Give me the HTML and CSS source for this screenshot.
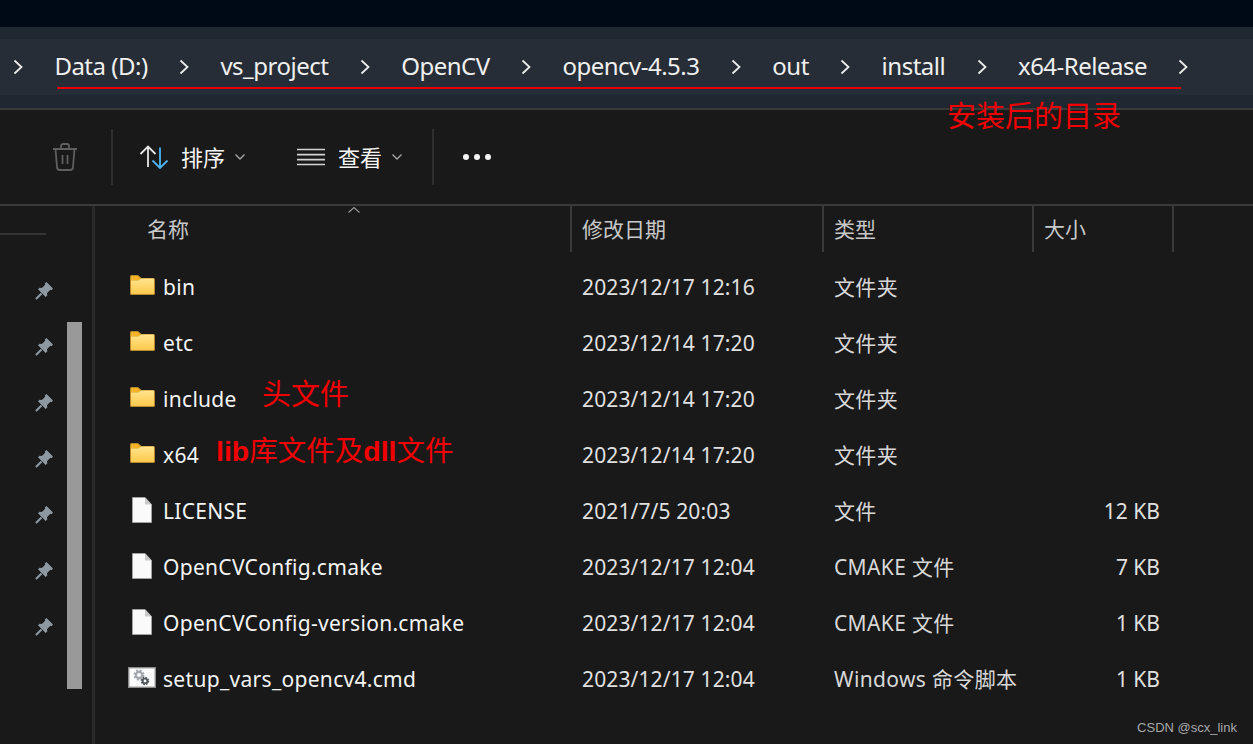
FILE: index.html
```html
<!DOCTYPE html>
<html lang="zh">
<head>
<meta charset="utf-8">
<title>install</title>
<link rel="stylesheet" href="styles.css">
</head>
<body>
<svg class="defs" width="0" height="0" aria-hidden="true">
  <defs>
    <linearGradient id="fg" x1="0" y1="0" x2="0" y2="1">
      <stop offset="0" stop-color="#ffe48c"/>
      <stop offset="1" stop-color="#fdc94f"/>
    </linearGradient>
    <symbol id="folder" viewBox="0 0 25 20">
      <path d="M0 1.500A1.500 1.500 0 0 1 1.500 0h6.500l3.500 3H23.500A1.500 1.500 0 0 1 25 4.500V18.500A1.500 1.500 0 0 1 23.500 20H1.500A1.500 1.500 0 0 1 0 18.500z" fill="#b8892c"/>
      <path d="M1 2a1 1 0 0 1 1-1h5.600l3 2.600-3 1.900H1z" fill="#f5b32a"/>
      <path d="M1 5.500h7l3-2h12.200a.8.8 0 0 1 .8.800V18.200a.8.8 0 0 1-.8.800H1.800a.8.8 0 0 1-.8-.8z" fill="url(#fg)"/>
    </symbol>
    <symbol id="file" viewBox="0 0 20 26">
      <path d="M0.500 0.500h12.500l6.500 7v18h-19z" fill="#fafafa" stroke="#a0a0a0"/>
      <path d="M13 0.500v7h6.500z" fill="#c9c9c9"/>
    </symbol>
    <symbol id="pin" viewBox="0 0 18 18">
      <path d="M11.500 0L18 6.500 16.500 8.200 15.300 7.800 12 11.200 12.300 13.500 10.700 15 3 7.300 4.500 5.800 6.800 6 10.200 2.700 9.800 1.500z" fill="#8c99a3"/>
      <path d="M6.500 11.500L1 17" stroke="#8c99a3" stroke-width="2.200" fill="none"/>
    </symbol>
  </defs>
</svg>

<header class="topbar">
  <nav class="crumbs">
    <svg class="chev" viewBox="0 0 10 16"><path d="M1.500 1.500l7 6.500-7 6.500"/></svg>
    <span>Data (D:)</span>
    <svg class="chev" viewBox="0 0 10 16"><path d="M1.500 1.500l7 6.500-7 6.500"/></svg>
    <span>vs_project</span>
    <svg class="chev" viewBox="0 0 10 16"><path d="M1.500 1.500l7 6.500-7 6.500"/></svg>
    <span>OpenCV</span>
    <svg class="chev" viewBox="0 0 10 16"><path d="M1.500 1.500l7 6.500-7 6.500"/></svg>
    <span>opencv-4.5.3</span>
    <svg class="chev" viewBox="0 0 10 16"><path d="M1.500 1.500l7 6.500-7 6.500"/></svg>
    <span>out</span>
    <svg class="chev" viewBox="0 0 10 16"><path d="M1.500 1.500l7 6.500-7 6.500"/></svg>
    <span>install</span>
    <svg class="chev" viewBox="0 0 10 16"><path d="M1.500 1.500l7 6.500-7 6.500"/></svg>
    <span>x64-Release</span>
    <svg class="chev" viewBox="0 0 10 16"><path d="M1.500 1.500l7 6.500-7 6.500"/></svg>
  </nav>
</header>

<section class="toolbar">
  <svg class="trash" viewBox="0 0 26 28"><path d="M1 6h24M9 6V3a2 2 0 0 1 2-2h4a2 2 0 0 1 2 2v3M3.500 6l1.500 18a3 3 0 0 0 3 3h10a3 3 0 0 0 3-3l1.500-18M10.500 12v9M15.500 12v9"/></svg>
  <i class="tool-sep first"></i>
  <div class="tool sort">
    <svg class="sort-icon" viewBox="0 0 30 24"><path class="up" d="M1.500 9L9 1.500 16.500 9M9 1.500V22"/><path class="down" d="M13.500 15.500L21 23l7.500-7.500M21 2.500V23"/></svg>
    <span>排序</span>
    <svg class="caret" viewBox="0 0 10 6"><path d="M.5.500L5 5 9.500.500"/></svg>
  </div>
  <div class="tool view">
    <svg class="view-icon" viewBox="0 0 28 18"><path d="M0 1.500h28M0 6.700h28M0 11.700h28M0 16.500h28"/></svg>
    <span>查看</span>
    <svg class="caret" viewBox="0 0 10 6"><path d="M.5.500L5 5 9.500.500"/></svg>
  </div>
  <i class="tool-sep last"></i>
  <div class="dots"><b></b><b></b><b></b></div>
</section>

<main class="body">
  <aside class="side">
    <hr class="side-line">
    <div class="pins">
      <svg class="pin"><use href="#pin"/></svg>
      <svg class="pin"><use href="#pin"/></svg>
      <svg class="pin"><use href="#pin"/></svg>
      <svg class="pin"><use href="#pin"/></svg>
      <svg class="pin"><use href="#pin"/></svg>
      <svg class="pin"><use href="#pin"/></svg>
      <svg class="pin"><use href="#pin"/></svg>
    </div>
    <div class="thumb"></div>
  </aside>

  <section class="list">
    <svg class="sort-mark" viewBox="0 0 12 6"><path d="M.5 5.500L6 .5l5.500 5"/></svg>
    <div class="head">
      <div class="hc c-name">名称</div>
      <div class="hc c-date">修改日期</div>
      <div class="hc c-type">类型</div>
      <div class="hc c-size">大小</div>
    </div>

    <div class="row"><div class="name"><span class="ico"><svg class="i-folder"><use href="#folder"/></svg></span>bin</div><div class="date">2023/12/17 12:16</div><div class="type">文件夹</div><div class="size"></div></div>
    <div class="row"><div class="name"><span class="ico"><svg class="i-folder"><use href="#folder"/></svg></span>etc</div><div class="date">2023/12/14 17:20</div><div class="type">文件夹</div><div class="size"></div></div>
    <div class="row"><div class="name"><span class="ico"><svg class="i-folder"><use href="#folder"/></svg></span>include</div><div class="date">2023/12/14 17:20</div><div class="type">文件夹</div><div class="size"></div></div>
    <div class="row"><div class="name"><span class="ico"><svg class="i-folder"><use href="#folder"/></svg></span>x64</div><div class="date">2023/12/14 17:20</div><div class="type">文件夹</div><div class="size"></div></div>
    <div class="row"><div class="name"><span class="ico"><svg class="i-file"><use href="#file"/></svg></span>LICENSE</div><div class="date">2021/7/5 20:03</div><div class="type">文件</div><div class="size">12 KB</div></div>
    <div class="row"><div class="name"><span class="ico"><svg class="i-file"><use href="#file"/></svg></span>OpenCVConfig.cmake</div><div class="date">2023/12/17 12:04</div><div class="type">CMAKE 文件</div><div class="size">7 KB</div></div>
    <div class="row"><div class="name"><span class="ico"><svg class="i-file"><use href="#file"/></svg></span>OpenCVConfig-version.cmake</div><div class="date">2023/12/17 12:04</div><div class="type">CMAKE 文件</div><div class="size">1 KB</div></div>
    <div class="row"><div class="name"><span class="ico"><svg class="i-cmd" viewBox="0 0 28 21"><rect x=".7" y=".7" width="26.600" height="19.600" fill="#fbfbfb" stroke="#8c8c8c" stroke-width="1.400"/><circle cx="11" cy="8" r="3.200" fill="none" stroke="#a0a6ac" stroke-width="2.200"/><circle cx="11" cy="8" r="4.800" fill="none" stroke="#a0a6ac" stroke-width="1.400" stroke-dasharray="2 1.800"/><circle cx="17" cy="14" r="2.400" fill="none" stroke="#50555a" stroke-width="1.900"/><circle cx="17" cy="14" r="3.700" fill="none" stroke="#50555a" stroke-width="1.200" stroke-dasharray="1.600 1.300"/></svg></span>setup_vars_opencv4.cmd</div><div class="date">2023/12/17 12:04</div><div class="type">Windows 命令脚本</div><div class="size">1 KB</div></div>
  </section>
</main>

<span class="note note-dir">安装后的目录</span>
<span class="note note-head">头文件</span>
<span class="note note-lib"><b>lib</b>库文件及<b>dll</b>文件</span>
<hr class="red-line">
<span class="credit">CSDN @scx_link</span>
</body>
</html>
```
FILE: styles.css
```css
* { box-sizing: border-box; }
html, body { margin: 0; padding: 0; }
body {
  width: 1253px;
  height: 744px;
  overflow: hidden;
  position: relative;
  display: flex;
  flex-direction: column;
  background: #191919;
  color: #f3f3f3;
  font-family: "Noto Sans", "Noto Sans CJK SC", sans-serif;
}
.defs { position: absolute; }

.topbar {
  height: 110px;
  flex: none;
  padding: 39px 0 13px;
  background: #1f2730;
  border-bottom: 2px solid #3a3a3a;
  box-shadow: inset 0 27px 0 #000a17;
}
.crumbs {
  height: 56px;
  display: flex;
  align-items: center;
  gap: 34.400px;
  padding-left: 16px;
  background: #272d36;
  font-size: 24px;
  letter-spacing: -0.5px;
  white-space: nowrap;
  color: #f0f0f0;
}
.crumbs span { margin-bottom: 3px; }
.chev { width: 10px; height: 16px; flex: none; margin: 0 -3px; }
.chev path { fill: none; stroke: #ececec; stroke-width: 1.800; }

.toolbar {
  height: 96px;
  flex: none;
  display: flex;
  align-items: center;
  border-bottom: 2px solid #3a3a3a;
  font-size: 22px;
}
.toolbar span { margin-bottom: 2px; }
.trash { width: 26px; height: 28px; margin-left: 52px; flex: none; }
.trash path { fill: none; stroke: #5f5f5f; stroke-width: 1.800; }
.tool-sep { width: 2px; height: 56px; background: #2e2e2e; flex: none; }
.tool-sep.first { margin-left: 33px; }
.tool-sep.last { margin-left: 30px; }
.tool { display: flex; align-items: center; flex: none; }
.sort { margin-left: 26px; }
.view { margin-left: 52px; }
.sort-icon { width: 30px; height: 24px; flex: none; margin-right: 12px; }
.sort-icon path { fill: none; stroke-width: 1.800; }
.sort-icon .up { stroke: #e6e6e6; }
.sort-icon .down { stroke: #4cb4f2; }
.view-icon { width: 28px; height: 18px; margin-right: 13px; flex: none; }
.view-icon path { fill: none; stroke: #d4d4d4; stroke-width: 1.700; }
.caret { width: 10px; height: 6px; margin-left: 10px; flex: none; }
.caret path { fill: none; stroke: #a8a8a8; stroke-width: 1.300; }
.dots { display: flex; gap: 5px; margin-left: 29px; }
.dots b { width: 6px; height: 6px; border-radius: 50%; background: #f5f5f5; }

.body { flex: 1; display: flex; min-height: 0; }
.side {
  width: 95px;
  flex: none;
  position: relative;
  border-right: 3px solid #2a2a2a;
}
.side-line { width: 46px; height: 2px; margin: 27px 0 0; border: 0; background: #333; }
.pins {
  display: flex;
  flex-direction: column;
  align-items: flex-end;
  gap: 38px;
  margin-top: 47px;
  padding-right: 39px;
}
.pin { width: 18px; height: 18px; display: block; }
.thumb { position: absolute; left: 67px; top: 116px; width: 15px; height: 367px; background: #999; }

.list { flex: 1; position: relative; }
.sort-mark { position: absolute; left: 253px; top: 1px; width: 12px; height: 6px; }
.sort-mark path { fill: none; stroke: #9a9a9a; stroke-width: 1.100; }
.head {
  display: flex;
  height: 46px;
  margin-bottom: 7px;
  font-size: 21px;
  color: #c8c8c8;
}
.hc { display: flex; align-items: center; padding: 0 0 2px 10px; border-right: 2px solid #3a3a3a; flex: none; }
.c-name { width: 477px; padding-left: 52px; }
.c-date { width: 252px; }
.c-type { width: 210px; }
.c-size { width: 140px; }

.row {
  display: grid;
  grid-template-columns: 487px 252px 210px 116px;
  height: 56px;
  align-items: center;
  font-size: 21px;
  color: #e8e8e8;
  white-space: nowrap;
}
.name { display: flex; align-items: center; padding-left: 30px; color: #f4f4f4; letter-spacing: .3px; }
.ico { width: 34px; height: 28px; flex: none; display: flex; align-items: center; justify-content: center; margin-right: 4px; }
.ico svg { display: block; }
.i-folder { width: 25px; height: 20px; margin-bottom: 4px; }
.i-file { width: 20px; height: 26px; margin-bottom: 2px; }
.i-cmd { width: 28px; height: 21px; margin-bottom: 3px; }
.date { color: #e0e0e0; letter-spacing: .12px; }
.type { color: #d8d8d8; letter-spacing: .35px; margin-bottom: 2px; }
.size { text-align: right; color: #e0e0e0; }

.note {
  position: absolute;
  color: #f00000;
  font-family: "Noto Sans CJK SC", sans-serif;
  font-size: 29px;
  line-height: 1;
  white-space: nowrap;
}
.note b { font-family: "Liberation Sans", sans-serif; font-weight: 700; }
.note-dir { left: 947px; top: 100px; }
.note-head { left: 262px; top: 378px; }
.note-lib { left: 216px; top: 435px; font-size: 28.500px; }
.red-line {
  position: absolute;
  left: 57px;
  top: 87px;
  width: 1124px;
  height: 2px;
  margin: 0;
  border: 0;
  background: #e80000;
}
.credit {
  position: absolute;
  right: 16px;
  bottom: 9px;
  font-family: "Liberation Sans", sans-serif;
  font-size: 13px;
  color: #a8a8a8;
}
```
